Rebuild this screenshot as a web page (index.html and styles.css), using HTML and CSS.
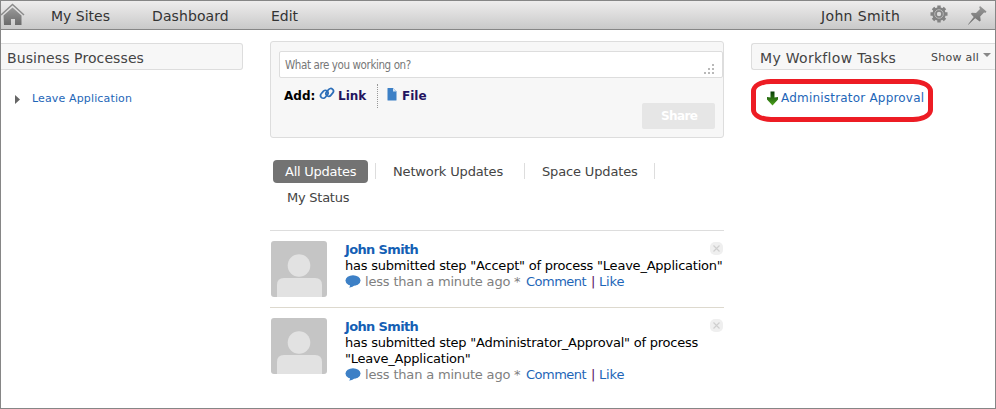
FILE: index.html
```html
<!DOCTYPE html>
<html lang="en">
<head>
<meta charset="utf-8">
<title>Dashboard</title>
<link rel="stylesheet" href="styles.css">
</head>
<body>
<svg class="defs" width="0" height="0">
  <defs>
    <linearGradient id="metal" x1="0" y1="0" x2="0" y2="1"><stop offset="0" stop-color="#999"/><stop offset="1" stop-color="#6b6b6b"/></linearGradient>
    <linearGradient id="green" x1="0" y1="0" x2="0" y2="1"><stop offset="0" stop-color="#063c06"/><stop offset="1" stop-color="#4fa51c"/></linearGradient>
    <symbol id="avatar" viewBox="0 0 56 56"><rect width="56" height="56" rx="3" fill="#c5c5c5"/><circle cx="28" cy="24.500" r="11.300" fill="#e2e2e2"/><path d="M6 56V44q0-7 7-7h31q7 0 7 7v12z" fill="#e2e2e2"/></symbol>
    <symbol id="bubble" viewBox="0 0 16 13"><ellipse cx="8" cy="5.500" rx="7.500" ry="5.300" fill="#3d80c6"/><path d="M5 9.500h5q-2 3-6 3 1.500-1 1-3z" fill="#3d80c6"/></symbol>
    <symbol id="close" viewBox="0 0 13 13"><rect width="13" height="13" rx="5" fill="#efefef"/><path d="M3.500 3.500l6 6m0-6l-6 6" stroke="#cfcfcf" stroke-width="1.200"/></symbol>
  </defs>
</svg>
<div class="page">
  <header class="toolbar">
    <svg class="home" viewBox="0 0 24 24"><path d="M0 12L11.500 1.500 23 12" fill="none" stroke="#8b8b8b" stroke-width="1.500"/><path d="M2.500 12.500L11.500 4.500l9 8v9.500h-6.500v-6h-4v6h-7z" fill="url(#metal)"/></svg>
    <nav class="menu"><a class="sites">My Sites</a><a class="dash">Dashboard</a><a class="edit">Edit</a></nav>
    <span class="user">John Smith</span>
    <svg class="gear" viewBox="0 0 18 18"><g fill="#828282"><circle cx="9" cy="9" r="6.700"/><path d="M7.300 .5h3.400v17H7.300zM.5 7.300h17v3.400H.5z"/><path d="M7.300 .5h3.400v17H7.300zM.5 7.300h17v3.400H.5z" transform="rotate(45 9 9)"/></g><circle cx="9" cy="9" r="4.300" fill="none" stroke="#b8b8b8"/><circle cx="9" cy="9" r="2.200" fill="#d9d9d9"/></svg>
    <svg class="pin" viewBox="0 0 19 19"><path d="M12 0l6.500 5.500-.8 1.200-1.700-.2-3.800 4 .5 4-1 1-4.500-3.200L.3 18.800 0 18.500 5.700 11 2.800 7.700l1.200-1 4 .2 4-3.900-.8-1.800z" fill="url(#metal)"/></svg>
  </header>
  <div class="columns">
    <section class="processes">
      <h2 class="bar left-bar"><span>Business Processes</span></h2>
      <div class="tree"><svg class="caret" viewBox="0 0 5 9"><path d="M0 0l5 4.500L0 9z" fill="#666"/></svg><a>Leave Application</a></div>
    </section>
    <main class="activity">
      <div class="composer">
        <div class="input"><span>What are you working on?</span><svg class="grip" viewBox="0 0 10 10"><path d="M8 0h2v2H8zM4 4h2v2H4zM8 4h2v2H8zM0 8h2v2H0zM4 8h2v2H4zM8 8h2v2H8z" fill="#b9b9b9"/></svg></div>
        <div class="attach">
          <b class="add">Add:</b>
          <svg class="chain" viewBox="0 0 16 13"><g fill="none" stroke="#2a6db8" stroke-width="1.700"><rect x="-4.300" y="-2.700" width="8.600" height="5.400" rx="2.700" transform="translate(5.300 7.300) rotate(-50)"/><rect x="-4.300" y="-2.700" width="8.600" height="5.400" rx="2.700" transform="translate(10.700 5.400) rotate(-50)"/></g></svg>
          <b class="link">Link</b>
          <i class="dots"></i>
          <svg class="doc" viewBox="0 0 10 13"><path d="M1 0h5l3.500 3.500V12q0 .5-.5.500H1q-.5 0-.5-.5V.5Q.5 0 1 0z" fill="#3d80c6"/><path d="M6 0v3.500h3.500" fill="#d5e4f4"/></svg>
          <b class="file">File</b>
        </div>
        <div class="actions"><span class="share"><b>Share</b></span></div>
      </div>
      <div class="tabs"><span class="active"><span>All Updates</span></span><i></i><span class="network">Network Updates</span><i></i><span class="space">Space Updates</span><i></i></div>
      <div class="tabs2"><span>My Status</span></div>
      <article class="post first">
        <svg class="avatar"><use href="#avatar"/></svg>
        <div class="body">
          <b class="name">John Smith</b>
          <div class="line">has submitted step "Accept" of process "Leave_Application"</div>
          <div class="meta"><svg class="bubble"><use href="#bubble"/></svg><span class="time">less than a minute ago</span><span class="star">*</span><a class="comment">Comment</a><span class="pipe">|</span><a class="like">Like</a></div>
        </div>
        <svg class="close"><use href="#close"/></svg>
      </article>
      <article class="post second">
        <svg class="avatar"><use href="#avatar"/></svg>
        <div class="body">
          <b class="name">John Smith</b>
          <div class="line">has submitted step "Administrator_Approval" of process</div>
          <div class="line">"Leave_Application"</div>
          <div class="meta"><svg class="bubble"><use href="#bubble"/></svg><span class="time">less than a minute ago</span><span class="star">*</span><a class="comment">Comment</a><span class="pipe">|</span><a class="like">Like</a></div>
        </div>
        <svg class="close"><use href="#close"/></svg>
      </article>
    </main>
    <section class="tasks">
      <h2 class="bar right-bar"><span class="title">My Workflow Tasks</span><span class="show">Show all</span><svg class="down" viewBox="0 0 8 4"><path d="M0 0h8L4 4z" fill="#888"/></svg></h2>
      <div class="task"><svg class="arrow" viewBox="0 0 11 15"><path d="M3.500 .5h4v6l3.500-.5v2.500L5.500 14.500 0 8.500V6l3.500.5z" fill="url(#green)"/></svg><a>Administrator Approval</a></div>
    </section>
  </div>
</div>
</body>
</html>
```

FILE: styles.css
```css
* { box-sizing: border-box; }
body { margin: 0; background: #fff; color: #000; font: 13px/16px "DejaVu Sans", sans-serif; white-space: nowrap; }
svg { display: block; flex: none; }
.defs { position: absolute; }
.page { width: 996px; height: 409px; border: 1px solid #868686; overflow: hidden; }
.toolbar { display: flex; align-items: flex-start; height: 29px; border-bottom: 1px solid #868686; background: linear-gradient(#eeeded, #c9c9c9); color: #333; font-size: 14px; line-height: 30px; }
.home { width: 24px; height: 24px; margin-top: 2px; }
.menu { display: flex; width: 796px; padding-left: 26px; }
.menu a { flex: none; color: #333; }
.sites { width: 101px; }
.dash { width: 119px; letter-spacing: .1px; }
.user { width: 109px; letter-spacing: .35px; }
.gear { width: 18px; height: 18px; margin-top: 4px; }
.pin { width: 19px; height: 19px; margin: 5px 0 0 20px; }
.columns { display: grid; grid-template-columns: 242px 454px 244px; column-gap: 27px; }
.bar { display: flex; height: 27px; margin: 13px 0 0; border: 1px solid #ddd; background: #f7f7f7; color: #444; font-size: 14px; font-weight: normal; line-height: 28px; }
.left-bar { border-left: 0; border-radius: 0 3px 3px 0; padding-left: 6px; letter-spacing: .1px; }
.right-bar { border-right: 0; border-radius: 3px 0 0 3px; padding-left: 8px; }
.title { width: 171px; letter-spacing: .3px; }
.show { width: 52px; font-size: 11px; line-height: 27px; letter-spacing: .25px; }
.down { width: 8px; height: 4px; margin-top: 9px; }
a { color: #1e66b8; }
.tree { display: flex; padding: 20px 0 0 14px; font-size: 11px; line-height: 18px; letter-spacing: .14px; }
.caret { width: 5px; height: 9px; margin: 5px 12px 0 0; }
.composer { height: 97px; margin-top: 11px; padding: 9px 0 0 8px; border: 1px solid #ddd; border-radius: 3px; background: #f7f7f7; }
.input { display: flex; justify-content: space-between; height: 27px; padding: 0 8px 0 5px; border: 1px solid #ddd; border-radius: 2px; background: #fff; color: #777; font: 11.5px/27px "DejaVu Sans Condensed", "DejaVu Sans", sans-serif; font-stretch: condensed; letter-spacing: -.4px; }
.input span { letter-spacing: -.4px; }
.grip { width: 10px; height: 10px; margin-top: 12px; }
.attach { display: flex; height: 24px; margin-top: 6px; padding-left: 5px; line-height: 24px; font-size: 12px; }
.add { width: 35px; }
.chain { width: 16px; height: 13px; margin: 3px 3px 0 0; }
.link { width: 39px; color: #24135f; }
.dots { width: 1px; height: 24px; margin-right: 9px; border-left: 1px dotted #999; }
.doc { width: 10px; height: 13px; margin: 4px 5px 0 0; }
.file { color: #24135f; }
.actions { display: flex; justify-content: flex-end; margin-top: -5px; padding-right: 8px; }
.share { width: 73px; height: 26px; border-radius: 2px; background: #e6e6e6; color: #fff; font-size: 12px; line-height: 27px; padding-left: 19px; letter-spacing: -.6px; }
.tabs { display: flex; margin-top: 22px; padding-left: 3px; line-height: 23px; color: #444; letter-spacing: -.15px; }
.active { width: 95px; height: 23px; padding-left: 12px; border-radius: 4px; background: #737373; color: #fff; letter-spacing: -.25px; }
.tabs i { width: 1px; height: 16px; margin-top: 3px; background: #ddd; }
.active + i { margin-left: 7px; }
.network { width: 148px; padding-left: 17px; }
.space { width: 129px; padding-left: 17px; }
.tabs2 { height: 47px; padding: 7px 0 0 17px; color: #444; letter-spacing: -.25px; }
.post { display: grid; grid-template-columns: 56px 378px 14px; padding: 10px 0 0 1px; border-top: 1px solid #ddd; height: 77px; }
.second { border-color: #ddd9ce; }
.avatar { width: 56px; height: 56px; }
.body { width: 378px; margin: 1px 0 0 18px; }
.line { letter-spacing: -.22px; }
.name { display: block; color: #155fb4; letter-spacing: -.65px; }
.meta { display: flex; color: #808080; letter-spacing: -.18px; }
.bubble { width: 16px; height: 13px; margin: 1px 4px 0 0; }
.time { width: 149px; }
.star { width: 12px; }
.comment { width: 65px; letter-spacing: -.5px; }
.pipe { width: 8px; color: #5a1060; }
.close { width: 13px; height: 13px; margin: 1px 0 0 5px; }
.task { display: flex; width: 182px; height: 43px; margin-top: 9px; padding: 7px 0 0 11px; border: 5px solid #ed1c24; border-radius: 20px / 12px; font-size: 12px; line-height: 15px; letter-spacing: .2px; }
.arrow { width: 11px; height: 15px; margin-right: 3px; }
```
